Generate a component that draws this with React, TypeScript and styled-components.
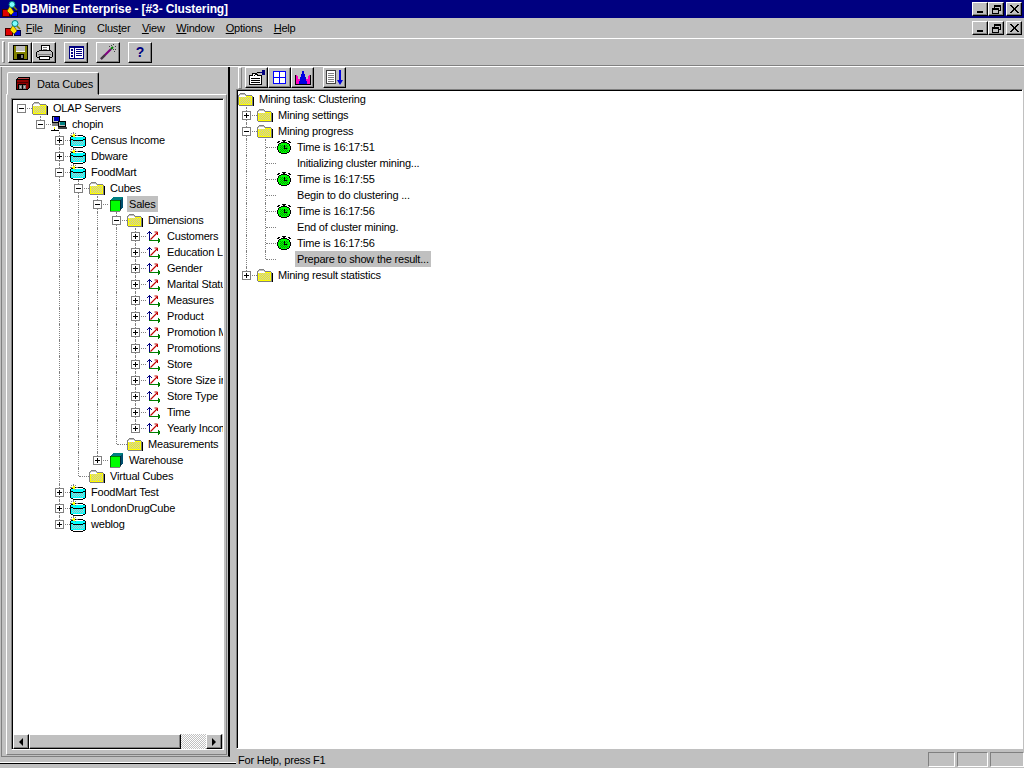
import React from "react";
import styled, { createGlobalStyle } from "styled-components";

const GlobalStyle = createGlobalStyle`
  html, body { margin: 0; padding: 0; background: #c0c0c0; }
  * { box-sizing: border-box; }
`;

const FONT = `"Liberation Sans", Arial, sans-serif`;

const Root = styled.div`
  width: 1024px; height: 768px; overflow: hidden; display: flex; flex-direction: column;
  background: #c0c0c0; color: #000; font: 11px ${FONT}; letter-spacing: -0.2px;
`;
const TitleBar = styled.div`
  height: 18px; flex: none; background: #000080; color: #fff; display: flex; align-items: center;
  padding-left: 2px; font-weight: bold; font-size: 12px; letter-spacing: -0.1px;
`;
const TitleText = styled.span`margin-left: 2px; flex: 1; white-space: nowrap;`;
const WinButtons = styled.div`display: flex; margin-right: 2px;`;
const WinBtn = styled.button<{ $gap?: boolean }>`
  width: 16px; height: 14px; padding: 0; margin-left: ${p => (p.$gap ? "2px" : "0")};
  background: #c0c0c0; border: 1px solid; border-color: #fff #000 #000 #fff;
  box-shadow: inset -1px -1px 0 #808080; display: flex; align-items: center; justify-content: center;
`;
const MenuBar = styled.div`
  height: 21px; flex: none; display: flex; align-items: center; padding-left: 5px;
  border-bottom: 1px solid #fff;
`;
const MenuItem = styled.span`padding: 0 5.75px; white-space: nowrap;`;
const Menus = styled.div`display: flex; flex: 1; margin-left: -2px;`;
const ToolRow = styled.div`
  height: 27px; flex: none; display: flex; align-items: center; padding-left: 2px;
  border-bottom: 1px solid #808080;
`;
const Grip = styled.div`
  width: 3px; height: 22px; flex: none; border: 1px solid; border-color: #fff #808080 #808080 #fff; margin-right: 3px;
`;
const ToolBtn = styled.button<{ $gap?: number }>`
  width: 24px; height: 21px; padding: 0; flex: none; margin-left: ${p => p.$gap ?? 0}px;
  background: #c0c0c0; border: 1px solid; border-color: #fff #000 #000 #fff;
  box-shadow: inset -1px -1px 0 #808080; display: flex; align-items: center; justify-content: center;
`;
const Body = styled.div`
  flex: 1; min-height: 0; display: flex; border-top: 1px solid #fff; height: 701px;
`;
const LeftDock = styled.div`
  width: 236px; height: 697px; flex: none; border-bottom: 1px solid #000; box-shadow: inset 0 -1px 0 #fff;
  padding-left: 1px;
`;
const DockFrame = styled.div`
  width: 229px; height: 690px; border: solid; border-width: 0 2px 1px 1px; border-color: #000 #000 #808080 #808080;
  padding: 5px 1px 0 4px; display: flex; flex-direction: column;
`;
const TabStrip = styled.div`display: flex; height: 23px; margin-bottom: -1px; position: relative; z-index: 1; padding-left: 1px;`;
const Tab = styled.div`
  width: 92px; height: 23px; background: #c0c0c0; display: flex; align-items: center; padding-left: 7px; gap: 6px;
  border: 1px solid; border-color: #fff #000 transparent #fff; border-radius: 2px 2px 0 0;
  box-shadow: inset -1px 0 0 #808080;
`;
const TabPanel = styled.div`
  width: 221px; height: 661px; border: 1px solid; border-color: #fff #808080 #808080 #fff;
  padding: 3px 2px 4px 4px; display: flex;
`;
const Sunken = styled.div`
  flex: 1; min-width: 0; min-height: 0; display: flex; border: 1px solid; border-color: #808080 #fff #fff #808080;
`;
const SunkenInner = styled.div`
  flex: 1; min-width: 0; display: flex; flex-direction: column; border: solid; border-width: 1px 0 0 1px; border-color: #000;
`;
const TreeArea = styled.div`
  flex: 1; min-height: 0; background: #fff; overflow: hidden; white-space: nowrap;
`;
const Scrollbar = styled.div`height: 15px; flex: none; display: flex; background: #c0c0c0; margin-right: 1px;`;
const ScrollBtn = styled.div`
  width: 16px; height: 15px; flex: none; border: 1px solid; border-color: #fff #000 #000 #fff;
  box-shadow: inset -1px -1px 0 #808080; display: flex; align-items: center; justify-content: center;
`;
const Arrow = styled.span<{ $left?: boolean }>`
  width: 0; height: 0; border-style: solid; border-color: transparent;
  border-width: 4px ${p => (p.$left ? "4px" : "0")} 4px ${p => (p.$left ? "0" : "4px")};
  ${p => (p.$left ? "border-right-color: #000;" : "border-left-color: #000;")}
`;
const ScrollThumb = styled.div`
  width: 152px; height: 15px; flex: none; border: 1px solid; border-color: #fff #000 #000 #fff;
  box-shadow: inset -1px -1px 0 #808080;
`;
const ScrollTrack = styled.div`
  flex: 1; background: repeating-conic-gradient(#fff 0 25%, #c0c0c0 0 50%) 0 0 / 2px 2px;
`;
const RightDock = styled.div`flex: 1; min-width: 0; display: flex; flex-direction: column; padding-right: 1px;`;
const RightBar = styled.div`height: 22px; flex: none; display: flex; padding-left: 2px; margin-right: -1px;`;
const RightGrip = styled.div`
  width: 4px; height: 22px; flex: none; border: 1px solid; border-color: #fff #808080 #808080 #fff; margin-right: 3px;
`;
const RightBtn = styled(ToolBtn)`width: 23px; height: 21px;`;
const StatusBar = styled.div`
  height: 19px; flex: none; display: flex; align-items: flex-start; padding: 3px 0 0 2px; margin-right: -1px;
`;
const StatusText = styled.span`flex: 1; line-height: 16px;`;
const StatusPane = styled.div<{ $w: number }>`
  width: ${p => p.$w}px; height: 15px; flex: none; margin-left: 2px; border: 1px solid; border-color: #808080 #fff #fff #808080;
`;

const Row = styled.div`height: 16px; display: flex; align-items: flex-start; line-height: 16px;`;
const Guide = styled.span<{ $on?: boolean }>`
  width: 19px; height: 16px; flex: none; position: relative;
  ${p => p.$on ? `&::before { content: ""; position: absolute; left: 8px; top: 0; bottom: 0; border-left: 1px dotted #808080; }` : ""}
`;
const Branch = styled.span<{ $last?: boolean; $root?: boolean }>`
  width: 19px; height: 16px; flex: none; position: relative; display: block;
  &::before {
    content: ""; position: absolute; left: 8px; top: ${p => (p.$root ? "8px" : "0")};
    ${p => (p.$last || p.$root ? "height: 8px;" : "bottom: 0;")}
    border-left: ${p => (p.$root ? "0" : "1px dotted #808080")};
  }
  &::after {
    content: ""; position: absolute; left: 9px; right: 0; top: 8px; border-top: 1px dotted #808080;
  }
`;
const Expander = styled.span<{ $open: boolean }>`
  position: absolute; z-index: 1; left: 4px; top: 4px; width: 9px; height: 9px; background: #fff; border: 1px solid #808080;
  &::before { content: ""; position: absolute; left: 1px; top: 3px; width: 5px; height: 1px; background: #000; }
  ${p => p.$open ? "" : `&::after { content: ""; position: absolute; left: 3px; top: 1px; width: 1px; height: 5px; background: #000; }`}
`;
const IconSlot = styled.span`
  width: 16px; height: 16px; flex: none; display: block;
  & svg { display: block; }
`;
const Label = styled.span<{ $sel?: boolean }>`
  margin-left: 3px; padding: 0 2px; height: 16px; line-height: 16px;
  background: ${p => (p.$sel ? "#c0c0c0" : "transparent")};
`;

/* ---------- icons ---------- */
const Px = styled.svg`display: block; shape-rendering: crispEdges; flex: none;`;

const checker = (x: number, y: number, w: number, h: number) => {
  let d = "";
  for (let j = 0; j < h; j++) for (let i = 0; i < w; i++) {
    if ((i + j) % 2 === 0) d += `M${x + i} ${y + j}h1v1h-1z`;
  }
  return d;
};
const FOLDER_DITHER = checker(2, 6, 11, 7);
const DB_DITHER = checker(2, 8, 12, 5);
const CLOCK_DITHER = checker(4, 6, 8, 7);

const Folder = () => (
  <Px width="16" height="16" viewBox="0 0 16 16">
    <path d="M2 3h5l1 1v1h6v9H1V4z" fill="#c0c0c0" />
    <path d="M2 4h5v1H2z" fill="#fff" />
    <rect x="1" y="5" width="13" height="9" fill="#ffff00" />
    <path d={FOLDER_DITHER} fill="#c0c0c0" />
    <path d="M1 5h7v1H1z" fill="#fff" />
    <path d="M2 2h5v1H2zM1 3h1v1H1zM0 4h1v10H0zM7 3h1v1H7zM8 4h6v1H8zM14 5h1v9h-1zM1 14h14v1H1z" fill="#808080" />
    <path d="M15 6h1v9h-1z" fill="#000" />
  </Px>
);
const Database = () => (
  <Px width="16" height="16" viewBox="0 0 16 16">
    <rect x="1" y="5" width="14" height="9" fill="#00ffff" />
    <path d={DB_DITHER} fill="#c0c0c0" />
    <path d="M3 3h10v1h2v1h1v9h-1v1h-2v1H3v-1H1v-1H0V5h1V4h2zM3 4v1H1v9h2v1h10v-1h2V5h-2V4z" fill="#000" fillRule="evenodd" />
    <path d="M1 7h2v1h10V7h2v1h-2v1H3V8H1z" fill="#000" />
    <path d="M3 0h1v2H3zM0 3h2v1H0zM1 1h1v1H1zM5 1h1v1H5zM5 5h1v1H5zM6 3h2v1H6z" fill="#808080" />
    <path d="M3 2h2v3H3zM2 3h1v1H2z" fill="#ffff00" />
  </Px>
);
const Computer = () => (
  <Px width="16" height="16" viewBox="0 0 16 16">
    <rect x="1.500" y="0.500" width="7" height="6" fill="#c0c0c0" stroke="#000" />
    <rect x="3" y="1" width="5" height="4" fill="#0000c0" />
    <rect x="1" y="7" width="7" height="3" fill="#808080" />
    <rect x="7.500" y="5.500" width="7" height="5" fill="#c0c0c0" stroke="#000" />
    <rect x="9" y="6" width="5" height="3" fill="#008080" />
    <rect x="7" y="11" width="9" height="2" fill="#404040" />
    <path d="M3 11h1v3h4v1H0v-1h3z" fill="#000" />
    <rect x="3" y="11" width="1" height="2" fill="#ffff00" />
  </Px>
);
const Cube = () => (
  <Px width="16" height="16" viewBox="0 0 16 16">
    <path d="M2 4h10v11H2z" fill="#00ff00" />
    <path d="M2 4l3-3h10l-3 3z" fill="#008080" />
    <path d="M12 4l3-3v10l-3 4z" fill="#005070" />
    <path d="M2 4h10v11H2z" fill="none" stroke="#000" strokeWidth="0.5" />
  </Px>
);
const Axes = () => (
  <Px width="16" height="16" viewBox="0 0 16 16">
    <path d="M3 3h1v10H3zM2 4h3v1H2zM1 5h1v1H1zM5 5h1v1H5z" fill="#000080" />
    <path d="M3 12h11v1H3zM13 11h1v3h-1zM12 10h1v5h-1z" fill="#008000" />
    <path d="M4.500 11.500l7-7" stroke="#c00000" strokeWidth="1.100" fill="none" style={{ shapeRendering: "auto" }} />
    <path d="M8.500 4h3v3" fill="none" stroke="#c00000" strokeWidth="1" style={{ shapeRendering: "auto" }} />
  </Px>
);
const Clock = () => (
  <Px width="16" height="16" viewBox="0 0 16 16">
    <path d="M6 1h4v1H6zM7 2h2v1H7zM2 2h2v1H2zM12 2h2v1h-2zM1 3h2v1H1zM13 3h2v1h-2z" fill="#000" />
    <path d="M5 3h6v1h2v2h1v6h-1v2h-2v1H5v-1H3v-2H2V6h1V4h2z" fill="#00ff00" />
    <path d={CLOCK_DITHER} fill="#00a000" />
    <path d="M5 3h6v1H5zM3 4h2v1H3zM11 4h2v1h-2zM2 5h1v2H2zM13 5h1v2h-1zM1 7h1v4H1zM14 7h1v4h-1zM2 11h1v2H2zM13 11h1v2h-1zM3 13h2v1H3zM11 13h2v1h-2zM5 14h6v1H5z" fill="#000" />
    <path d="M8 6h1v4H8zM9 9h2v1H9z" fill="#000" />
  </Px>
);
const AppLogo = () => (
  <Px width="17" height="17" viewBox="0 0 17 17">
    <rect x="0.500" y="8.500" width="7" height="7" fill="#e00000" stroke="#400000" />
    <rect x="9.500" y="10.500" width="6" height="5" fill="#0000e0" stroke="#000040" />
    <path d="M5 10l3-5 4 6-3 3z" fill="#ffe000" stroke="#404000" strokeWidth="0.6" style={{ shapeRendering: "auto" }} />
    <circle cx="10" cy="3.500" r="3" fill="#80ffff" stroke="#008080" style={{ shapeRendering: "auto" }} />
    <path d="M12 6l3 3" stroke="#808000" strokeWidth="1.500" style={{ shapeRendering: "auto" }} />
  </Px>
);
const TabCube = () => (
  <Px width="16" height="16" viewBox="0 0 16 16">
    <path d="M3 1h12v10l-2 3H1V3z" fill="#000" />
    <path d="M3 2h11l-1 1H2z" fill="#c04040" />
    <path d="M2 4h11v9H2z" fill="#900000" />
    <path d="M13 4l1-1v8l-1 1z" fill="#600000" />
    <path d="M2 6h11v1H2z" fill="#500000" />
    <path d="M3 8h8v5H3z" fill="#000" />
    <path d="M4 9h3v4H4zM8 9h3v4H8z" fill="#808080" />
    <path d="M5 10h1v2H5zM9 10h1v2H9z" fill="#c0c0c0" />
  </Px>
);
const MinGlyph = () => <Px width="8" height="8" viewBox="0 0 8 8"><rect x="1" y="6" width="6" height="2" fill="#000" /></Px>;
const RestoreGlyph = () => (
  <Px width="9" height="9" viewBox="0 0 9 9">
    <path d="M2 0h7v6H7v-1h1V2H3v1H2z" fill="#000" />
    <path d="M0 3h7v6H0zM1 5v3h5V5z" fill="#000" fillRule="evenodd" />
  </Px>
);
const CloseGlyph = () => (
  <Px width="9" height="8" viewBox="0 0 9 8">
    <path d="M0 0h2l2.500 3L7 0h2L5.500 4 9 8H7L4.500 5 2 8H0l3.500-4z" fill="#000" />
  </Px>
);
const Floppy = () => (
  <Px width="15" height="15" viewBox="0 0 15 15">
    <path d="M0 0h14l1 1v14H0z" fill="#000" />
    <path d="M1 1h13v13H1z" fill="#808000" />
    <rect x="3" y="1" width="9" height="6" fill="#c0c0c0" />
    <rect x="3" y="6" width="9" height="1" fill="#fff" />
    <rect x="4" y="9" width="7" height="5" fill="#000" />
    <rect x="8" y="10" width="2" height="3" fill="#808080" />
  </Px>
);
const Printer = () => (
  <Px width="17" height="16" viewBox="0 0 17 16">
    <path d="M5.500 1.500h8v5h-8z" fill="#fff" stroke="#000" />
    <path d="M3 7h12l2 2v4H0V9z" fill="#c0c0c0" />
    <path d="M3 6h12v1h1v1h1v5h-1v1H1v-1H0V8h1V7h2z M3 7v1H1v5h15V8h-1V7z" fill="#000" fillRule="evenodd" />
    <path d="M3.500 12.500h10v3h-10z" fill="#fff" stroke="#000" />
    <path d="M2 10h13" stroke="#808080" />
    <path d="M7 3h4M7 5h4" stroke="#808080" />
  </Px>
);
const ListIcon = () => (
  <Px width="15" height="13" viewBox="0 0 15 13">
    <path d="M0 0h15v13H0zM1 2v10h13V2z" fill="#000080" fillRule="evenodd" />
    <rect x="1" y="2" width="13" height="10" fill="#fff" />
    <path d="M2 3h2v2H2zM2 6h2v2H2zM2 9h2v2H2zM5 2h1v10H5zM7 3h6v1H7zM7 5h6v1H7zM7 7h6v1H7zM7 9h6v1H7z" fill="#000080" />
  </Px>
);
const Wand = () => (
  <Px width="16" height="16" viewBox="0 0 16 16">
    <path d="M1 15L11 5" stroke="#800080" strokeWidth="2.200" style={{ shapeRendering: "auto" }} />
    <path d="M1 15L5 11" stroke="#404040" strokeWidth="2.200" style={{ shapeRendering: "auto" }} />
    <path d="M11 5l2-2" stroke="#008000" strokeWidth="2" style={{ shapeRendering: "auto" }} />
    <path d="M13 0h1v1h-1zM15 2h1v1h-1zM11 1h1v1h-1zM15 5h1v1h-1zM13 5h1v1h-1zM9 2h1v1H9zM14 7h1v1h-1z" fill="#404040" />
  </Px>
);
const HelpMark = styled.span`
  color: #000080; font: bold 14px ${FONT}; line-height: 16px;
`;
const PropSheet = () => (
  <Px width="18" height="16" viewBox="0 0 18 16">
    <path d="M1.500 5.500h3v-2h4l1 2h4v9h-12z" fill="#fff" stroke="#000" />
    <path d="M3 8h9M3 10h9M3 12h9" stroke="#000" />
    <path d="M5 6h1V5h1V4h1V3h1V2h3v1H9v1H8v1H7v1" fill="#000" />
    <rect x="14" y="0" width="3" height="5" fill="#000080" />
    <path d="M12 2h3" stroke="#000080" />
  </Px>
);
const GridIcon = () => (
  <Px width="13" height="13" viewBox="0 0 13 13">
    <rect width="13" height="13" fill="#0000ff" />
    <path d="M1 1h5v5H1zM7 1h5v5H7zM1 7h5v5H1zM7 7h5v5H7z" fill="#fff" />
  </Px>
);
const ChartIcon = () => (
  <Px width="16" height="15" viewBox="0 0 16 15">
    <path d="M1 5h1v1h1v3h2V7h6v2h2V6h1V5h1v9H1z" fill="#ff00c0" />
    <path d="M7 1h2v3h1v3h1v4h1v3H4v-3h1V7h1V4h1z" fill="#0000e0" />
    <path d="M1 14h14v1H1zM0 5h1v10H0zM15 5h1v10h-1z" fill="#000" />
  </Px>
);
const SortIcon = () => (
  <Px width="18" height="16" viewBox="0 0 18 16">
    <rect x="0.500" y="0.500" width="9" height="13" fill="#fff" stroke="#404040" />
    <path d="M2 3h6M2 5h6M2 7h6M2 9h6M2 11h6" stroke="#808080" />
    <path d="M13 0h2v10h2l-3 5-3-5h2z" fill="#0000e0" style={{ shapeRendering: "auto" }} />
  </Px>
);

/* ---------- tree ---------- */
type IconName = "folder" | "db" | "pc" | "cube" | "axes" | "clock" | "none";
type Node = { label: string; icon: IconName; exp?: "+" | "-"; sel?: boolean; kids?: Node[] };

const iconFor = (n: IconName) =>
  n === "folder" ? <Folder /> : n === "db" ? <Database /> : n === "pc" ? <Computer /> :
  n === "cube" ? <Cube /> : n === "axes" ? <Axes /> : n === "clock" ? <Clock /> : null;

const ax = (label: string): Node => ({ label, icon: "axes", exp: "+" });
const db = (label: string, kids?: Node[]): Node => ({ label, icon: "db", exp: kids ? "-" : "+", kids });

const leftTree: Node = {
  label: "OLAP Servers", icon: "folder", exp: "-", kids: [{
    label: "chopin", icon: "pc", exp: "-", kids: [
      db("Census Income"), db("Dbware"),
      db("FoodMart", [
        { label: "Cubes", icon: "folder", exp: "-", kids: [
          { label: "Sales", icon: "cube", exp: "-", sel: true, kids: [
            { label: "Dimensions", icon: "folder", exp: "-", kids: [
              "Customers", "Education Level", "Gender", "Marital Status", "Measures", "Product",
              "Promotion Media", "Promotions", "Store", "Store Size in SQFT", "Store Type", "Time", "Yearly Income",
            ].map(ax) },
            { label: "Measurements", icon: "folder" },
          ] },
          { label: "Warehouse", icon: "cube", exp: "+" },
        ] },
        { label: "Virtual Cubes", icon: "folder" },
      ]),
      db("FoodMart Test"), db("LondonDrugCube"), db("weblog"),
    ],
  }],
};

const time = (label: string): Node => ({ label, icon: "clock" });
const note = (label: string, sel?: boolean): Node => ({ label, icon: "none", sel });
const rightTree: Node = {
  label: "Mining task: Clustering", icon: "folder", kids: [
    { label: "Mining settings", icon: "folder", exp: "+" },
    { label: "Mining progress", icon: "folder", exp: "-", kids: [
      time("Time is 16:17:51"), note("Initializing cluster mining..."),
      time("Time is 16:17:55"), note("Begin to do clustering ..."),
      time("Time is 16:17:56"), note("End of cluster mining."),
      time("Time is 16:17:56"), note("Prepare to show the result...", true),
    ] },
    { label: "Mining result statistics", icon: "folder", exp: "+" },
  ],
};

const renderTree = (
  node: Node, guides: boolean[], last: boolean, root: boolean, rootCell: boolean, out: React.ReactNode[],
) => {
  out.push(
    <Row key={out.length}>
      {guides.map((g, i) => <Guide key={i} $on={g} />)}
      {(!root || rootCell) && (
        <Branch $last={last} $root={root}>
          {node.exp && <Expander $open={node.exp === "-"} />}
        </Branch>
      )}
      <IconSlot>{iconFor(node.icon)}</IconSlot>
      <Label $sel={node.sel}>{node.label}</Label>
    </Row>,
  );
  const kids = node.kids ?? [];
  const next = root && !rootCell ? guides : [...guides, !last && !root];
  kids.forEach((k, i) => renderTree(k, next, i === kids.length - 1, false, rootCell, out));
};

const TreeRows = ({ tree, rootCell }: { tree: Node; rootCell: boolean }) => {
  const out: React.ReactNode[] = [];
  renderTree(tree, [], true, true, rootCell, out);
  return <>{out}</>;
};

export default function App() {
  return (
    <Root>
      <GlobalStyle />
      <TitleBar>
        <AppLogo />
        <TitleText>DBMiner Enterprise - [#3- Clustering]</TitleText>
        <WinButtons>
          <WinBtn><MinGlyph /></WinBtn>
          <WinBtn><RestoreGlyph /></WinBtn>
          <WinBtn $gap><CloseGlyph /></WinBtn>
        </WinButtons>
      </TitleBar>
      <MenuBar>
        <AppLogo />
        <Menus>
          <MenuItem><u>F</u>ile</MenuItem>
          <MenuItem><u>M</u>ining</MenuItem>
          <MenuItem>Clus<u>t</u>er</MenuItem>
          <MenuItem><u>V</u>iew</MenuItem>
          <MenuItem><u>W</u>indow</MenuItem>
          <MenuItem><u>O</u>ptions</MenuItem>
          <MenuItem><u>H</u>elp</MenuItem>
        </Menus>
        <WinButtons>
          <WinBtn><MinGlyph /></WinBtn>
          <WinBtn><RestoreGlyph /></WinBtn>
          <WinBtn $gap><CloseGlyph /></WinBtn>
        </WinButtons>
      </MenuBar>
      <ToolRow>
        <Grip />
        <ToolBtn><Floppy /></ToolBtn>
        <ToolBtn><Printer /></ToolBtn>
        <ToolBtn $gap={8}><ListIcon /></ToolBtn>
        <ToolBtn $gap={8}><Wand /></ToolBtn>
        <ToolBtn $gap={8}><HelpMark>?</HelpMark></ToolBtn>
      </ToolRow>
      <Body>
        <LeftDock>
          <DockFrame>
            <TabStrip>
              <Tab><TabCube />Data Cubes</Tab>
            </TabStrip>
            <TabPanel>
              <Sunken>
                <SunkenInner>
                  <TreeArea><TreeRows tree={leftTree} rootCell /></TreeArea>
                  <Scrollbar>
                    <ScrollBtn><Arrow $left /></ScrollBtn>
                    <ScrollThumb />
                    <ScrollTrack />
                    <ScrollBtn><Arrow /></ScrollBtn>
                  </Scrollbar>
                </SunkenInner>
              </Sunken>
            </TabPanel>
          </DockFrame>
        </LeftDock>
        <RightDock>
          <RightBar>
            <RightGrip />
            <RightBtn $gap={0}><PropSheet /></RightBtn>
            <RightBtn><GridIcon /></RightBtn>
            <RightBtn><ChartIcon /></RightBtn>
            <RightBtn $gap={9}><SortIcon /></RightBtn>
          </RightBar>
          <Sunken>
            <SunkenInner>
              <TreeArea><TreeRows tree={rightTree} rootCell={false} /></TreeArea>
            </SunkenInner>
          </Sunken>
          <StatusBar>
            <StatusText>For Help, press F1</StatusText>
            <StatusPane $w={27} />
            <StatusPane $w={31} />
            <StatusPane $w={34} />
          </StatusBar>
        </RightDock>
      </Body>
    </Root>
  );
}
